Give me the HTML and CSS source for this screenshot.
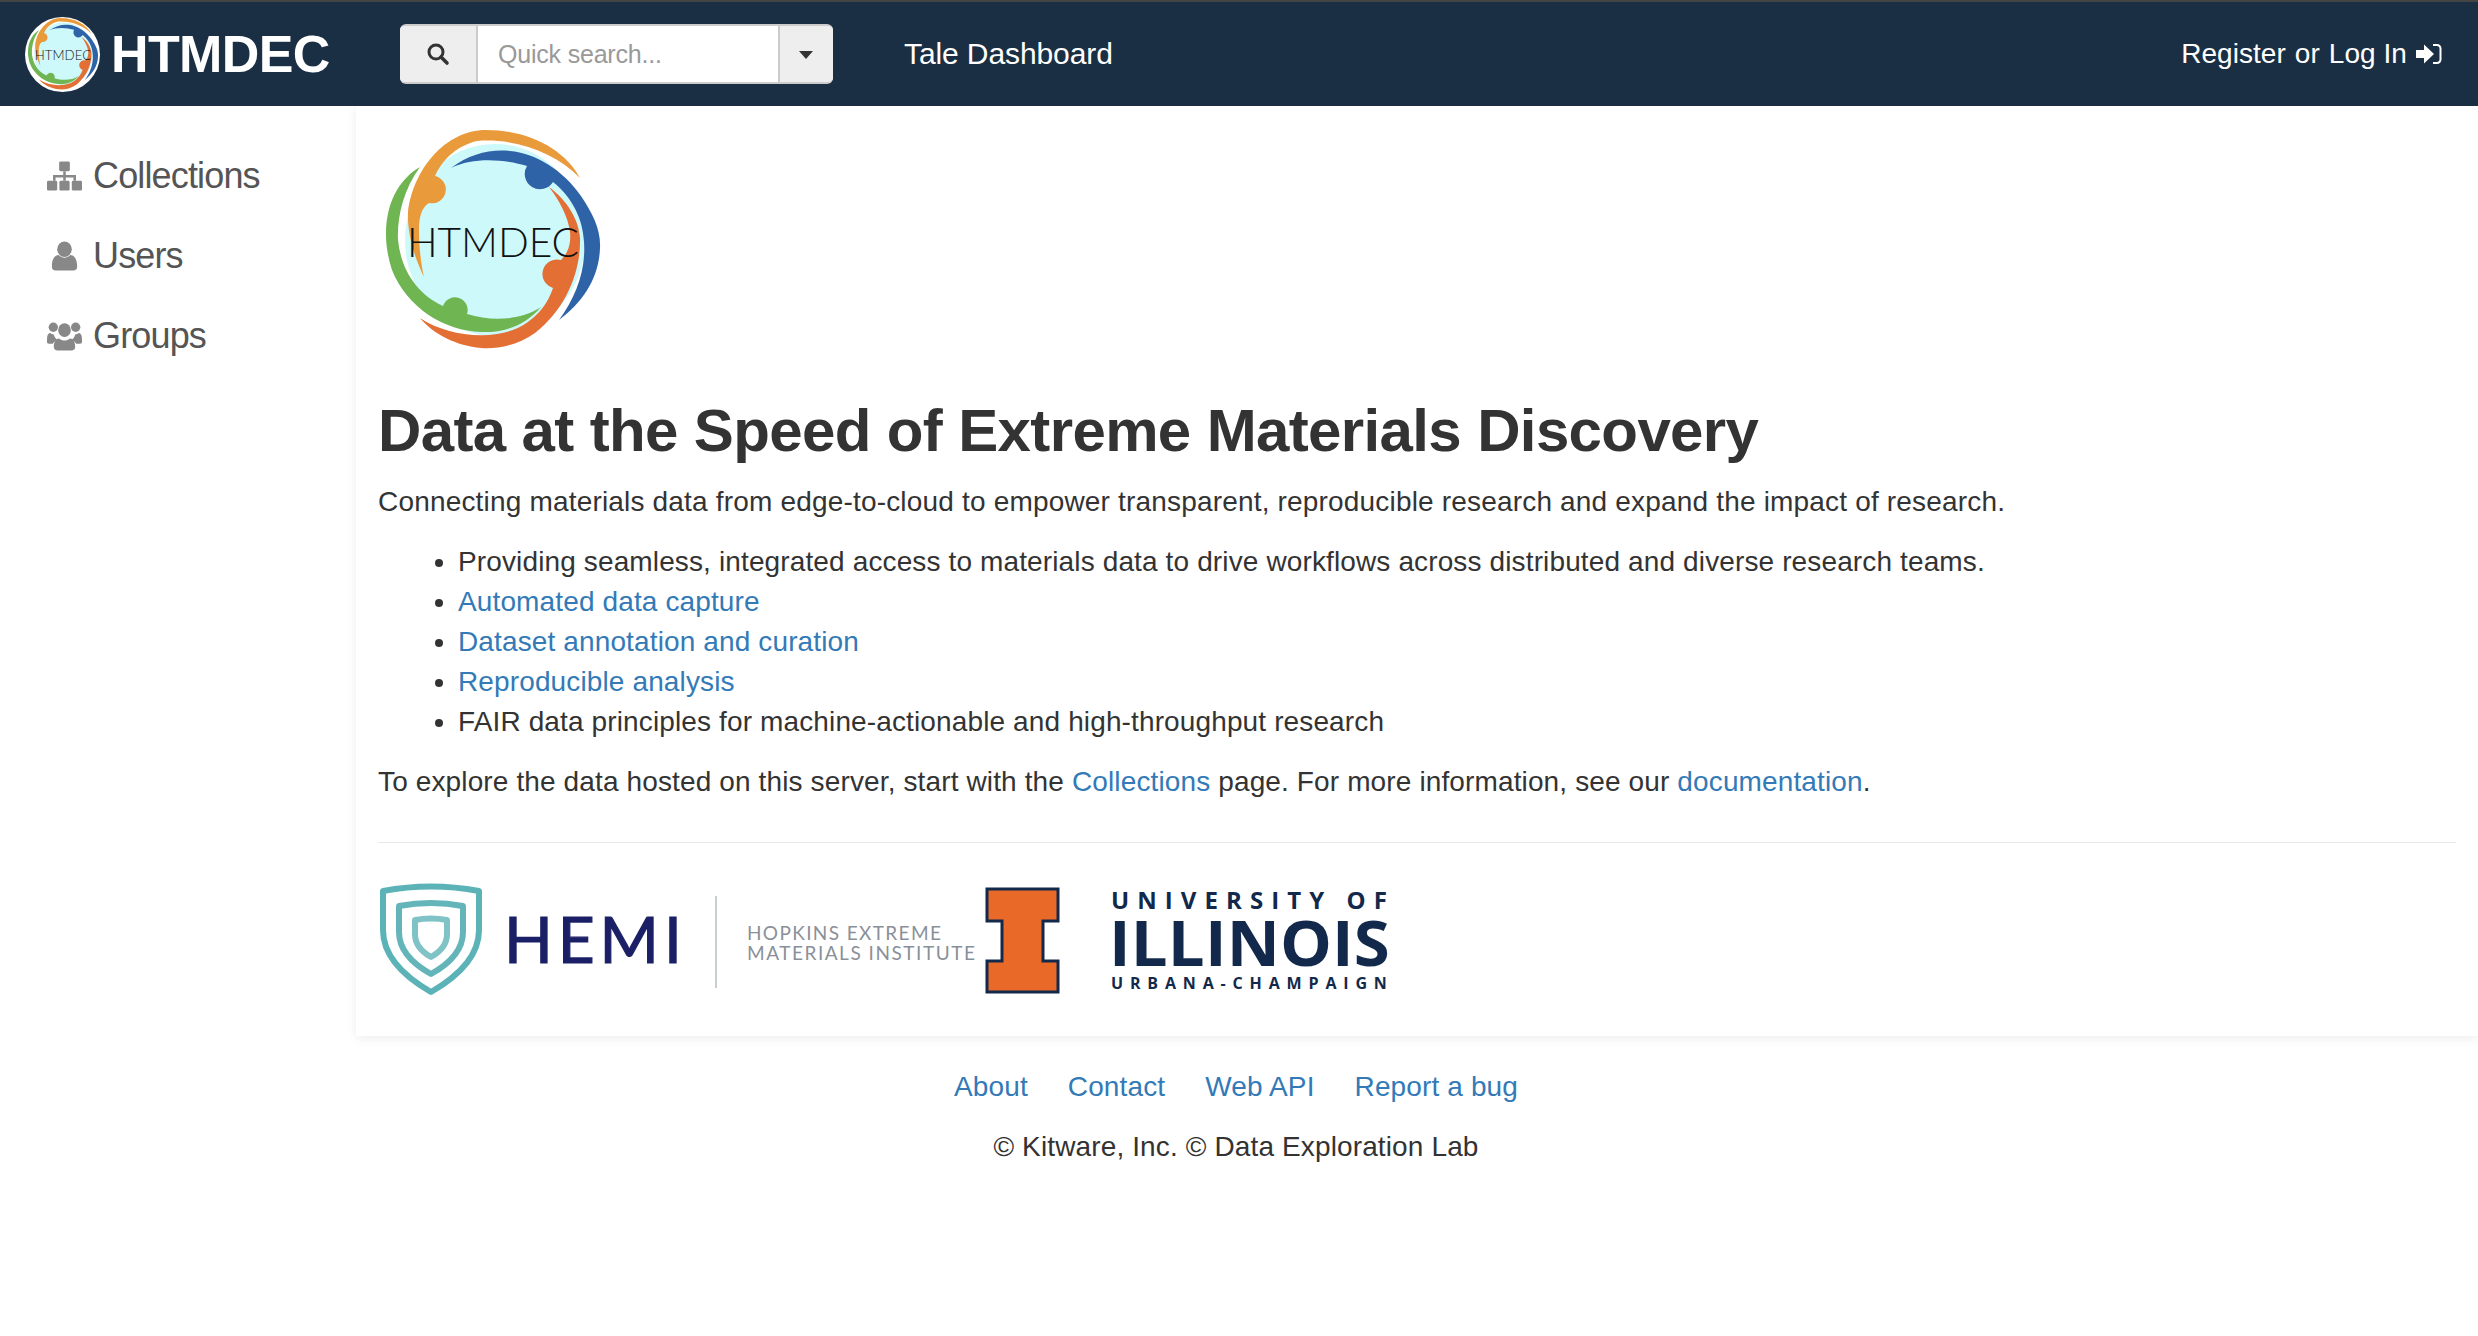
FILE: index.html
```html
<!DOCTYPE html>
<html lang="en">
<head>
    <meta charset="UTF-8">
    <title>HTMDEC</title>
    <link rel="stylesheet" href="styles.css">
</head>

<body>
    <!-- Shared logo -->
    <svg class="defs" width="0" height="0">
        <symbol id="logo-htmdec" viewBox="0 0 216 220">
            <ellipse cx="110" cy="110" rx="90" ry="96" fill="#cdf9fb"/>
            <path fill="#e99a3a" d="M39 147C28 125 22 100 23 82C28 40 60 0 101 0C145 0 180 20 195 48C170 22 130 8 92 11C74 15 58 28 50 46A13 13 0 0 1 44 73C36 78 34 88 34 100C34 118 36 134 39 147Z"/>
            <path fill="#2f63a8" d="M66 38C85 24 105 19 125 21C150 23 178 40 196 66C208 84 216 100 215 118C214 148 198 172 174 190C190 168 201 142 199 112C198 90 188 68 168 52A13 13 0 0 1 142 36C122 30 90 26 66 38Z"/>
            <path fill="#e46f35" d="M164 57C182 70 194 90 195 108C196 140 182 178 150 203C132 216 112 219 96 218C72 216 48 204 35 188C56 202 86 208 112 204C140 200 160 182 168 158A13 13 0 0 1 176 130C184 122 186 112 185 102C183 86 174 70 164 57Z"/>
            <path fill="#6fb552" d="M35 37C18 60 12 88 13 110C16 140 32 164 58 176A12 12 0 0 1 82 184C108 192 136 190 156 177C140 196 118 203 96 202C60 201 22 178 7 140C-3 110 0 80 12 60C18 50 26 42 35 37Z"/>
        </symbol>
    </svg>

    <!-- Header -->
    <header class="topbar">
        <a class="brand" href="#">
            <span class="brand-badge">
                <svg class="brand-logo" viewBox="0 0 216 220"><use href="#logo-htmdec"/><text class="logo-text" x="108" y="127" text-anchor="middle" textLength="172" lengthAdjust="spacingAndGlyphs">HTMDEC</text></svg>
            </span>
            <span class="brand-name">HTMDEC</span>
        </a>
        <div class="search">
            <span class="search-icon">
                <svg width="24" height="24" viewBox="0 0 24 24"><circle cx="10" cy="10" r="7" fill="none" stroke="#333" stroke-width="3"/><path d="M15 15l6 6" stroke="#333" stroke-width="3.600" stroke-linecap="round"/></svg>
            </span>
            <span class="search-input">Quick search...</span>
            <span class="search-caret"></span>
        </div>
        <a class="dashboard" href="#">Tale Dashboard</a>
        <div class="login">
            <a href="#">Register</a>
            <span>or</span>
            <a href="#">Log In</a>
            <svg width="26" height="22" viewBox="0 0 26 22"><path fill="#fff" d="M0 7h8V1.500L18 11 8 20.500V15H0z"/><path d="M17 2h4a3.500 3.500 0 0 1 3.500 3.500v11A3.500 3.500 0 0 1 21 20h-4" fill="none" stroke="#fff" stroke-width="2"/></svg>
        </div>
    </header>

    <div class="layout">
        <!-- Sidebar -->
        <aside class="sidebar">
            <a class="side-item" href="#">
                <svg class="side-icon" viewBox="0 0 36 30"><g fill="#888"><rect x="12.500" y="0" width="11" height="10" rx="1.500"/><rect x="0" y="20" width="10.500" height="10" rx="1.500"/><rect x="12.750" y="20" width="10.500" height="10" rx="1.500"/><rect x="25.500" y="20" width="10.500" height="10" rx="1.500"/><path d="M16.700 10h2.600v4h10.500v6h-2.600v-3.400H19.300V20h-2.600v-3.400H8.800V20H6.200v-6h10.500z"/></g></svg>
                Collections
            </a>
            <a class="side-item" href="#">
                <svg class="side-icon" viewBox="0 0 36 30"><g fill="#888"><ellipse cx="18" cy="8" rx="7.500" ry="8"/><path d="M5 26c0-8 3-12 7-12 2 1.800 4 2.700 6 2.700s4-.9 6-2.700c4 0 7 4 7 12 0 2.500-1.500 4-4 4H9c-2.500 0-4-1.500-4-4z"/></g></svg>
                Users
            </a>
            <a class="side-item" href="#">
                <svg class="side-icon" viewBox="0 0 36 30"><g fill="#888"><circle cx="6.500" cy="6" r="4.800"/><circle cx="29.500" cy="6" r="4.800"/><ellipse cx="18" cy="9" rx="6.500" ry="7"/><path d="M0 18c0-4 1.500-6 3.500-6 1 1 2 1.500 3.500 1.500.6 2.500 1.800 4 3.500 5.500-2 .8-3.500 2-4.500 4H2c-1.200 0-2-.8-2-2z"/><path d="M36 18c0-4-1.500-6-3.500-6-1 1-2 1.500-3.500 1.500-.6 2.500-1.800 4-3.500 5.500 2 .8 3.500 2 4.500 4H34c1.200 0 2-.8 2-2z"/><path d="M7 26c0-5 2-8.500 5.500-8.500 1.700 1.500 3.500 2.200 5.500 2.200s3.800-.7 5.500-2.200C27 17.500 29 21 29 26c0 2.500-1.500 4-4 4H11c-2.500 0-4-1.500-4-4z"/></g></svg>
                Groups
            </a>
        </aside>

        <div class="content">
            <main class="panel">
                <svg class="hero-logo" viewBox="0 0 216 220"><use href="#logo-htmdec"/><text class="logo-text" x="108" y="127" text-anchor="middle" textLength="172" lengthAdjust="spacingAndGlyphs">HTMDEC</text></svg>
                <h1>Data at the Speed of Extreme Materials Discovery</h1>
                <p class="intro">Connecting materials data from edge-to-cloud to empower transparent, reproducible research and expand the impact of research.</p>
                <ul>
                    <li>Providing seamless, integrated access to materials data to drive workflows across distributed and diverse research teams.</li>
                    <li><a href="#">Automated data capture</a></li>
                    <li><a href="#">Dataset annotation and curation</a></li>
                    <li><a href="#">Reproducible analysis</a></li>
                    <li>FAIR data principles for machine-actionable and high-throughput research</li>
                </ul>
                <p>To explore the data hosted on this server, start with the <a href="#">Collections</a> page. For more information, see our <a href="#">documentation</a>.</p>
                <hr>
                <!-- Partner logos -->
                <svg class="partners" width="1020" height="116" viewBox="0 0 1020 116">
                    <g fill="none" stroke-linejoin="round">
                        <path d="M5 9C37 3 69 3 101 9V48C101 75 79 95 53 110C27 95 5 75 5 48Z" stroke="#5bb3b8" stroke-width="6"/>
                        <path d="M21 24C42 20 64 20 85 24V50C85 68 71 82 53 92C35 82 21 68 21 50Z" stroke="#63b5ba" stroke-width="6"/>
                        <path d="M37 38C48 36 58 36 69 38V52C69 62 62 70 53 75C44 70 37 62 37 52Z" stroke="#7fc3c6" stroke-width="6"/>
                    </g>
                    <text class="hemi" x="126" y="81" textLength="178" lengthAdjust="spacing">HEMI</text>
                    <rect x="337" y="14" width="2" height="92" fill="#c9ced1"/>
                    <text class="hopkins" x="369" y="58" textLength="194" lengthAdjust="spacing">HOPKINS EXTREME</text>
                    <text class="hopkins" x="369" y="78" textLength="228" lengthAdjust="spacing">MATERIALS INSTITUTE</text>
                    <path d="M609 7h71v32h-15v40h15v31h-71V79h15V39h-15z" fill="#e96a28" stroke="#13294b" stroke-width="3"/>
                    <text class="illini-top" x="733" y="27" textLength="276" lengthAdjust="spacing">UNIVERSITY OF</text>
                    <text class="illini-main" x="731" y="84" textLength="281" lengthAdjust="spacingAndGlyphs">ILLINOIS</text>
                    <text class="illini-sub" x="733" y="107" textLength="276" lengthAdjust="spacing">URBANA-CHAMPAIGN</text>
                </svg>
            </main>
        </div>
    </div>

    <!-- Footer -->
    <footer class="footer">
        <nav class="footer-links">
            <a href="#">About</a>
            <a href="#">Contact</a>
            <a href="#">Web API</a>
            <a href="#">Report a bug</a>
        </nav>
        <p>© Kitware, Inc. © Data Exploration Lab</p>
    </footer>
</body>
</html>
```

FILE: styles.css
```css
/* General */
body {
    margin: 0;
    font-family: "Liberation Sans", Arial, sans-serif;
    font-size: 28px;
    line-height: 40px;
    letter-spacing: 0.13px;
    color: #333;
    background: #fff;
}

a {
    color: #337ab7;
    text-decoration: none;
}

.defs {
    position: absolute;
}

.logo-text {
    font-family: Lato, sans-serif;
    font-size: 42px;
    font-weight: 300;
    letter-spacing: 0;
    fill: #111;
}

/* Header */
.topbar {
    display: flex;
    align-items: center;
    height: 104px;
    background: #1b2f44;
    border-top: 2px solid #444;
}

.brand {
    display: flex;
    align-items: center;
    width: 400px;
    padding-left: 25px;
    box-sizing: border-box;
}

.brand-badge {
    display: flex;
    align-items: center;
    justify-content: center;
    width: 75px;
    height: 75px;
    background: #fff;
    border-radius: 50%;
}

.brand-logo {
    width: 72px;
    height: 72px;
}

.brand-name {
    margin-left: 11px;
    font-size: 52px;
    font-weight: 700;
    letter-spacing: -0.6px;
    color: #fff;
}

.search {
    display: flex;
    width: 433px;
    height: 60px;
    box-sizing: border-box;
    background: #fff;
    border-top: 2px solid #ccc;
    border-bottom: 2px solid #ccc;
    border-radius: 6px;
    overflow: hidden;
}

.search-icon {
    display: flex;
    align-items: center;
    justify-content: center;
    width: 76px;
    background: #eee;
    border-right: 2px solid #ccc;
}

.search-input {
    flex: 1;
    padding-left: 20px;
    line-height: 56px;
    font-size: 25px;
    letter-spacing: -0.2px;
    color: #999;
}

.search-caret {
    position: relative;
    width: 53px;
    background: #eee;
    border-left: 2px solid #ccc;
}

.search-caret::after {
    content: "";
    position: absolute;
    top: 25px;
    left: 19px;
    border-top: 8px solid #333;
    border-left: 7px solid transparent;
    border-right: 7px solid transparent;
}

.dashboard {
    margin-left: 71px;
    font-size: 30px;
    letter-spacing: -0.1px;
    color: #fff;
}

.login {
    display: flex;
    align-items: center;
    gap: 9px;
    margin-left: auto;
    margin-right: 36px;
    letter-spacing: 0.05px;
    color: #fff;
}

.login a {
    color: #fff;
}

/* Sidebar */
.layout {
    display: flex;
}

.sidebar {
    width: 356px;
    flex-shrink: 0;
    padding-top: 30px;
}

.side-item {
    display: flex;
    align-items: center;
    gap: 11px;
    height: 80px;
    padding-left: 47px;
    font-size: 36px;
    letter-spacing: -0.85px;
    color: #555;
}

.side-icon {
    width: 35px;
    height: 30px;
}

/* Main */
.content {
    flex: 1;
    min-width: 0;
}

.panel {
    height: 930px;
    padding: 24px 22px 0;
    box-sizing: border-box;
    background: #fff;
    box-shadow: 0 2px 10px rgba(0, 0, 0, 0.08);
}

.hero-logo {
    display: block;
    width: 216px;
    height: 220px;
    margin-left: 7px;
}

h1 {
    margin: 48px 0 0;
    font-size: 60px;
    line-height: 66px;
    font-weight: 700;
    letter-spacing: -0.63px;
}

.panel p {
    margin: 18px 0 20px;
}

.panel .intro {
    letter-spacing: 0.18px;
}

.panel ul + p {
    margin-top: 20px;
}

.panel ul {
    margin: 0;
    padding-left: 80px;
}

hr {
    height: 1px;
    margin: 40px 0;
    border: 0;
    background: #e8e8e8;
}

.partners {
    display: block;
    margin-top: -1px;
}

.hemi {
    font-family: Lato, sans-serif;
    font-size: 64px;
    font-weight: 400;
    fill: #1b1f66;
    stroke: #1b1f66;
    stroke-width: 1.2px;
}

.hopkins {
    font-family: Lato, sans-serif;
    font-size: 19px;
    fill: #8a9099;
}

.illini-top,
.illini-main,
.illini-sub {
    font-family: "Open Sans", sans-serif;
    font-weight: 700;
    fill: #13294b;
}

.illini-top {
    font-size: 24px;
}

.illini-main {
    font-size: 62px;
}

.illini-sub {
    font-size: 16px;
}

/* Footer */
.footer {
    padding: 31px 6px 0 0;
    text-align: center;
}

.footer-links {
    display: flex;
    justify-content: center;
    gap: 40px;
}

.footer p {
    margin: 20px 0 0;
}
```
